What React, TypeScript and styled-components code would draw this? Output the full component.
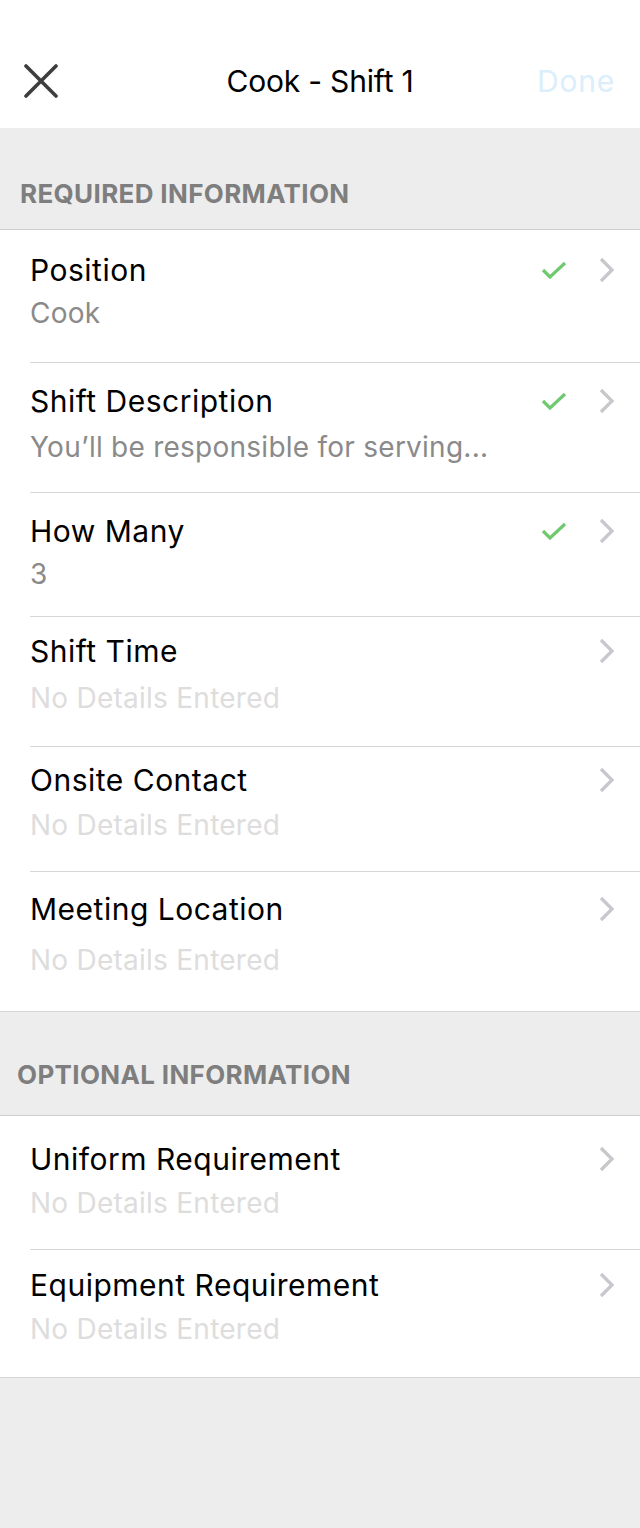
import React from "react";
import styled, { createGlobalStyle } from "styled-components";

const Global = createGlobalStyle`
  html, body { margin: 0; padding: 0; background: #ededed; }
  body { font-family: Inter, Roboto, "Noto Sans", sans-serif; -webkit-font-smoothing: antialiased; }
`;

const Page = styled.div`
  width: 640px;
  min-height: 1528px;
  background: #ededed;
  display: flex;
  flex-direction: column;
`;

const NavBar = styled.header`
  height: 128px;
  background: #ffffff;
  display: grid;
  grid-template-columns: 120px 1fr 120px;
  align-items: center;
  padding-top: 34px;
  box-sizing: border-box;
`;

const CloseButton = styled.button`
  border: none;
  background: none;
  padding: 0 0 0 24px;
  display: flex;
  align-items: center;
  justify-content: flex-start;
  height: 40px;
`;

const Title = styled.h1`
  margin: 0;
  text-align: center;
  font-size: 30px;
  font-weight: 400;
  color: #000;
  letter-spacing: -0.2px;
`;

const DoneButton = styled.span`
  text-align: right;
  padding-right: 25px;
  font-size: 30px;
  color: #dbeefb;
  letter-spacing: 0.8px;
`;

const SectionHeader = styled.div<{ $h: number; $pad: number; $left: number }>`
  height: ${(p) => p.$h}px;
  box-sizing: border-box;
  padding: ${(p) => p.$pad}px 0 0 ${(p) => p.$left}px;
  border-bottom: 1px solid #cfcfd2;
  font-size: 26px;
  line-height: 30px;
  font-weight: 700;
  color: #7e7e7e;
  letter-spacing: 0.35px;
`;

const Group = styled.section`
  background: #ffffff;
  border-bottom: 1px solid #d6d6d8;
`;

const Row = styled.div<{ $h: number; $top: number; $last?: boolean }>`
  height: ${(p) => p.$h}px;
  box-sizing: border-box;
  margin-left: 30px;
  padding: ${(p) => p.$top}px 25px 0 0;
  border-bottom: ${(p) => (p.$last ? "none" : "1px solid #d7d7da")};
  display: grid;
  grid-template-columns: 1fr auto;
  align-content: start;
`;

const Label = styled.div`
  font-size: 30px;
  line-height: 36px;
  color: #000;
  letter-spacing: 0.5px;
`;

const Value = styled.div<{ $empty?: boolean; $gap: number }>`
  grid-column: 1 / span 2;
  margin-top: ${(p) => p.$gap}px;
  font-size: 28px;
  line-height: 34px;
  letter-spacing: 0.25px;
  color: ${(p) => (p.$empty ? "#dddddd" : "#8a8a8a")};
`;

const Icons = styled.div`
  display: flex;
  align-items: center;
  gap: 32px;
  height: 36px;
`;

const CloseIcon = () => (
  <svg width="34" height="34" viewBox="0 0 34 34">
    <path d="M2 2 L32 32 M32 2 L2 32" stroke="#3d3d3d" strokeWidth="3.6" strokeLinecap="round" />
  </svg>
);

const Check = () => (
  <svg width="26" height="20" viewBox="0 0 26 20">
    <path d="M2 10 L9 17 L24 3" fill="none" stroke="#6fca6f" strokeWidth="3.2" />
  </svg>
);

const Chevron = () => (
  <svg width="16" height="26" viewBox="0 0 16 26">
    <path d="M2 2 L13 13 L2 24" fill="none" stroke="#c7c7cc" strokeWidth="3.2" />
  </svg>
);

type Item = { label: string; value?: string; done?: boolean; h: number; top: number; gap: number };

const required: Item[] = [
  { label: "Position", value: "Cook", done: true, h: 133, top: 22, gap: 8 },
  { label: "Shift Description", value: "You’ll be responsible for serving...", done: true, h: 130, top: 20, gap: 11 },
  { label: "How Many", value: "3", done: true, h: 124, top: 20, gap: 8 },
  { label: "Shift Time", h: 130, top: 16, gap: 12 },
  { label: "Onsite Contact", h: 125, top: 15, gap: 10 },
  { label: "Meeting Location", h: 139, top: 19, gap: 16 },
];

const optional: Item[] = [
  { label: "Uniform Requirement", h: 134, top: 25, gap: 9 },
  { label: "Equipment Requirement", h: 127, top: 17, gap: 9 },
];

const Rows = ({ items }: { items: Item[] }) => (
  <Group>
    {items.map((it, i) => (
      <Row key={it.label} $h={it.h} $top={it.top} $last={i === items.length - 1}>
        <Label>{it.label}</Label>
        <Icons>
          {it.done && <Check />}
          <Chevron />
        </Icons>
        <Value $empty={!it.value} $gap={it.gap}>
          {it.value ?? "No Details Entered"}
        </Value>
      </Row>
    ))}
  </Group>
);

export default function App() {
  return (
    <Page>
      <Global />
      <NavBar>
        <CloseButton aria-label="Close">
          <CloseIcon />
        </CloseButton>
        <Title>Cook - Shift 1</Title>
        <DoneButton>Done</DoneButton>
      </NavBar>
      <SectionHeader $h={102} $pad={51} $left={20}>REQUIRED INFORMATION</SectionHeader>
      <Rows items={required} />
      <SectionHeader $h={104} $pad={48} $left={17}>OPTIONAL INFORMATION</SectionHeader>
      <Rows items={optional} />
    </Page>
  );
}
